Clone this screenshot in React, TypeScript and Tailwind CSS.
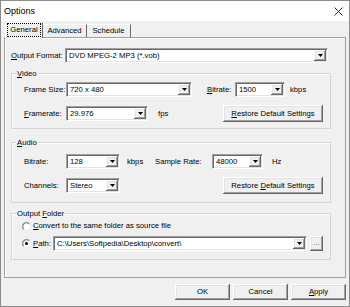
import React from "react";

const raised =
    "bg-[#f0f0f0] shadow-[inset_-1px_-1px_0_#696969,inset_1px_1px_0_#ffffff,inset_-2px_-2px_0_#a0a0a0,inset_2px_2px_0_#e3e3e3]";

function Arrow() {
    return (
        <div className={`w-[12px] h-full flex items-center justify-center ${raised}`}>
            <svg width="5" height="3" viewBox="0 0 5 3">
                <polygon points="0,0 5,0 2.5,3" fill="#000" />
            </svg>
        </div>
    );
}

function Combo({ width, value }: { width: string; value: string }) {
    return (
        <div className={`${width} h-[15px] flex bg-white border border-t-[#a0a0a0] border-l-[#a0a0a0] border-b-white border-r-white`}>
            <div className="flex-1 flex p-[1px] shadow-[inset_1px_1px_0_#696969,inset_-1px_-1px_0_#e3e3e3]">
                <span className="flex-1 flex items-center pl-[2px] overflow-hidden whitespace-nowrap">{value}</span>
                <Arrow />
            </div>
        </div>
    );
}

function Button({ width, height, children }: { width: string; height: string; children: React.ReactNode }) {
    return (
        <div className={`${width} ${height} flex items-center justify-center ${raised}`}>
            {children}
        </div>
    );
}

function Radio({ checked }: { checked?: boolean }) {
    return (
        <svg width="9" height="9" viewBox="0 0 12 12" className="shrink-0">
            <circle cx="6" cy="6" r="5.5" fill="#fff" />
            <path d="M10.2 1.8 A5.5 5.5 0 0 0 1.8 10.2" fill="none" stroke="#8a8a8a" strokeWidth="1" />
            <path d="M9.4 2.6 A4.5 4.5 0 0 0 2.6 9.4" fill="none" stroke="#5a5a5a" strokeWidth="1" />
            <path d="M1.8 10.2 A5.5 5.5 0 0 0 10.2 1.8" fill="none" stroke="#e3e3e3" strokeWidth="1" />
            {checked && <circle cx="6" cy="6" r="2" fill="#000" />}
        </svg>
    );
}

function Group({ title, height, children }: { title: React.ReactNode; height: string; children: React.ReactNode }) {
    return (
        <div className={`relative ml-[6px] w-[320px] ${height} border border-[#d5d5d5] shadow-[inset_1px_1px_0_#ffffff]`}>
            {/* caption sits over the frame line */}
            <span className="absolute -top-[5px] left-[4px] px-[1px] bg-[#f0f0f0] leading-[9px]">{title}</span>
            {children}
        </div>
    );
}

export default function App() {
    return (
        <div className="w-[350px] h-[307px] border border-[#8c8c8c] bg-[#f0f0f0] flex flex-col font-['Liberation_Sans',Arial,sans-serif] text-[7.7px] text-black leading-none">
            {/* Title bar */}
            <div className="h-[20px] bg-white flex items-center justify-between pl-[3px] pr-[6px]">
                <span className="text-[9px]">Options</span>
                <svg width="9" height="9" viewBox="0 0 9 9">
                    <path d="M0.5 0.5 L8.5 8.5 M8.5 0.5 L0.5 8.5" stroke="#111" strokeWidth="0.9" />
                </svg>
            </div>

            <div className="flex-1 flex flex-col px-[3px] pt-[1px]">
                {/* Tabs */}
                <div className="h-[16px] -mb-[1px] pl-[1px] flex items-end relative z-10">
                    <div className="w-[38px] h-[16px] bg-[#f0f0f0] border-l border-t border-l-white border-t-white border-r border-r-[#696969] flex items-center justify-center pb-[1px]">
                        <span className="border border-dotted border-black px-[2px] py-[2px]">General</span>
                    </div>
                    <div className="w-[44px] h-[13px] mb-[1px] border-t border-t-white border-r border-r-[#696969] flex items-center justify-center">
                        Advanced
                    </div>
                    <div className="w-[44px] h-[13px] mb-[1px] border-t border-t-white border-r border-r-[#696969] flex items-center justify-center">
                        Schedule
                    </div>
                </div>

                {/* Tab panel */}
                <div className="h-[241px] border border-[#a0a0a0] shadow-[inset_1px_1px_0_#ffffff] flex flex-col">
                    <div className="mt-[10px] pl-[6px] h-[15px] flex items-center">
                        <span className="w-[54px]"><span className="underline">O</span>utput Format:</span>
                        <Combo width="w-[263px]" value="DVD MPEG-2 MP3 (*.vob)" />
                    </div>

                    <div className="mt-[10px]">
                        <Group title={<><span className="underline">V</span>ideo</>} height="h-[56px]">
                            <div className="pt-[8px] pl-[12px] pr-[7px] flex flex-col gap-[8px]">
                                <div className="h-[15px] flex items-center">
                                    <span className="w-[42px]">Frame Size:</span>
                                    <Combo width="w-[126px]" value="720 x 480" />
                                    <span className="ml-[15px] w-[28px]"><span className="underline">B</span>itrate:</span>
                                    <Combo width="w-[50px]" value="1500" />
                                    <span className="ml-[5px]">kbps</span>
                                </div>
                                <div className="h-[17px] flex items-center">
                                    <span className="w-[42px]"><span className="underline">F</span>ramerate:</span>
                                    <Combo width="w-[82px]" value="29.976" />
                                    <span className="ml-[10px]">fps</span>
                                    <div className="ml-auto">
                                        <Button width="w-[100px]" height="h-[17px]">
                                            <span><span className="underline">R</span>estore Default Settings</span>
                                        </Button>
                                    </div>
                                </div>
                            </div>
                        </Group>
                    </div>

                    <div className="mt-[13px]">
                        <Group title={<><span className="underline">A</span>udio</>} height="h-[61px]">
                            <div className="pt-[11px] pl-[12px] pr-[7px] flex flex-col gap-[8px]">
                                <div className="h-[15px] flex items-center">
                                    <span className="w-[42px]">Bitrate:</span>
                                    <Combo width="w-[54px]" value="128" />
                                    <span className="ml-[7px] w-[28px]">kbps</span>
                                    <span className="w-[57px]">Sample Rate:</span>
                                    <Combo width="w-[51px]" value="48000" />
                                    <span className="ml-[9px]">Hz</span>
                                </div>
                                <div className="h-[17px] flex items-center">
                                    <span className="w-[42px]">Channels:</span>
                                    <Combo width="w-[54px]" value="Stereo" />
                                    <div className="ml-auto">
                                        <Button width="w-[100px]" height="h-[17px]">
                                            <span>Restore <span className="underline">D</span>efault Settings</span>
                                        </Button>
                                    </div>
                                </div>
                            </div>
                        </Group>
                    </div>

                    <div className="mt-[10px]">
                        <Group title={<>Output <span className="underline">F</span>older</>} height="h-[47px]">
                            <div className="pt-[6px] pl-[10px] pr-[7px] flex flex-col gap-[4px]">
                                <div className="h-[12px] flex items-center">
                                    <Radio />
                                    <span className="ml-[2px]"><span className="underline">C</span>onvert to the same folder as source file</span>
                                </div>
                                <div className="h-[15px] flex items-center">
                                    <Radio checked />
                                    <span className="ml-[2px] w-[20px]"><span className="underline">P</span>ath:</span>
                                    <Combo width="w-[254px]" value="C:\Users\Softpedia\Desktop\convert\" />
                                    <div className="ml-[3px]">
                                        <Button width="w-[13px]" height="h-[15px]">
                                            <span className="text-[#555] -mt-[2px]">...</span>
                                        </Button>
                                    </div>
                                </div>
                            </div>
                        </Group>
                    </div>
                </div>

                {/* Dialog buttons */}
                <div className="mt-[6px] flex justify-end gap-[3px]">
                    <Button width="w-[55px]" height="h-[16px]">OK</Button>
                    <Button width="w-[55px]" height="h-[16px]">Cancel</Button>
                    <Button width="w-[55px]" height="h-[16px]">
                        <span><span className="underline">A</span>pply</span>
                    </Button>
                </div>
            </div>
        </div>
    );
}
